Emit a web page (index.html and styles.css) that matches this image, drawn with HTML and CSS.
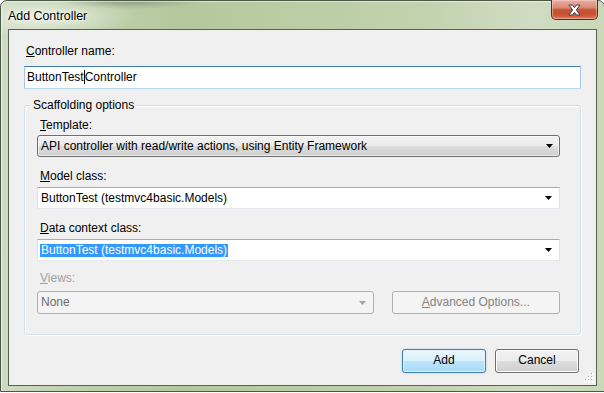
FILE: index.html
```html
<!DOCTYPE html>
<html lang="en">
<head>
<meta charset="UTF-8">
<title>Add Controller</title>
<link rel="stylesheet" href="styles.css">
</head>
<body>
    <div class="window">
        <div class="titlebar">
            <span class="title">Add Controller</span>
            <div class="close">
                <svg width="15" height="12" viewBox="0 0 15 12">
                    <path d="M2 1 L5.6 1 L7.5 3.6 L9.4 1 L13 1 L9.4 6 L13 11 L9.4 11 L7.5 8.4 L5.6 11 L2 11 L5.6 6 Z" fill="#fff" stroke="#3f3f4f" stroke-width="1" stroke-linejoin="round"/>
                </svg>
            </div>
        </div>
        <div class="client">
            <div class="label name-label"><u>C</u>ontroller name:</div>
            <div class="textbox">ButtonTest<span class="caret"></span>Controller</div>

            <div class="group">
                <span class="group-title">Scaffolding options</span>

                <div class="label"><u>T</u>emplate:</div>
                <div class="combo combo-list">
                    <span class="combo-text">API controller with read/write actions, using Entity Framework</span>
                    <svg class="arrow" width="7" height="4" viewBox="0 0 7 4"><polygon points="0,0 7,0 3.5,4" fill="#000"/></svg>
                </div>

                <div class="label field-gap"><u>M</u>odel class:</div>
                <div class="combo combo-edit">
                    <span class="combo-text">ButtonTest (testmvc4basic.Models)</span>
                    <svg class="arrow" width="7" height="4" viewBox="0 0 7 4"><polygon points="0,0 7,0 3.5,4" fill="#000"/></svg>
                </div>

                <div class="label field-gap"><u>D</u>ata context class:</div>
                <div class="combo combo-edit">
                    <span class="combo-text selected">ButtonTest (testmvc4basic.Models)</span>
                    <svg class="arrow" width="7" height="4" viewBox="0 0 7 4"><polygon points="0,0 7,0 3.5,4" fill="#000"/></svg>
                </div>

                <div class="label field-gap disabled views-label"><u>V</u>iews:</div>
                <div class="views-row">
                    <div class="combo combo-disabled">
                        <span class="combo-text">None</span>
                        <svg class="arrow" width="7" height="4" viewBox="0 0 7 4"><polygon points="0,0 7,0 3.5,4" fill="#a3a3a3"/></svg>
                    </div>
                    <div class="button button-disabled"><u>A</u>dvanced Options...</div>
                </div>
            </div>

            <div class="buttons">
                <div class="button button-default">Add</div>
                <div class="button">Cancel</div>
            </div>

            <svg class="grip" width="10" height="10" viewBox="0 0 10 10">
                <rect x="8" y="0" width="2" height="2" fill="#fff"/>
                <rect x="8" y="4" width="2" height="2" fill="#fff"/>
                <rect x="8" y="8" width="2" height="2" fill="#fff"/>
                <rect x="4" y="4" width="2" height="2" fill="#fff"/>
                <rect x="4" y="8" width="2" height="2" fill="#fff"/>
                <rect x="0" y="8" width="2" height="2" fill="#fff"/>
                <rect x="7" y="0" width="1" height="1" fill="#a6aca0"/>
                <rect x="7" y="3" width="1" height="1" fill="#a6aca0"/>
                <rect x="7" y="6" width="1" height="1" fill="#a6aca0"/>
                <rect x="4" y="3" width="1" height="1" fill="#a6aca0"/>
                <rect x="4" y="6" width="1" height="1" fill="#a6aca0"/>
                <rect x="1" y="6" width="1" height="1" fill="#a6aca0"/>
            </svg>
        </div>
    </div>
</body>
</html>
```

FILE: styles.css
```css
/* page */
body {
    margin: 0;
    background: #fff;
    overflow: hidden;
    font-family: "Liberation Sans", Arial, sans-serif;
    font-size: 12px;
    color: #000;
}

u {
    text-underline-offset: 1px;
}

/* aero frame */
.window {
    width: 589px;
    height: 384px;
    padding: 0 7px 6px 7px;
    border: 1px solid #4a5846;
    border-radius: 7px 7px 0 0;
    background:
        radial-gradient(ellipse 70px 8px at 130px 0px, rgba(110, 120, 110, 0.55), rgba(110, 120, 110, 0)),
        radial-gradient(ellipse 90px 20px at 45px 16px, rgba(240, 245, 235, 0.8), rgba(240, 245, 235, 0)),
        linear-gradient(90deg, #cfdac4 0%, #c0d1ad 12%, #b4c89d 30%, #bacda4 50%, #c2d2ae 70%, #d0dcc2 88%, #c9d8b8 100%);
    box-shadow: inset 1px 1px 0 rgba(255, 255, 255, 0.5);
}

.titlebar {
    height: 28px;
    display: flex;
    align-items: flex-start;
}

.title {
    padding: 8px 0 0 0;
    line-height: 15px;
    font-size: 12.4px;
    text-shadow: 0 0 6px #fff, 0 0 3px #fff;
}

.close {
    margin: -1px -1px 0 auto;
    width: 45px;
    height: 19px;
    border: 1px solid #5a2a22;
    border-top: none;
    border-radius: 0 0 5px 5px;
    background: linear-gradient(#e7b0a3 0%, #d98a77 40%, #c55235 52%, #c8502f 75%, #dc7a5b 100%);
    box-shadow: inset 0 0 0 1px rgba(255, 220, 210, 0.45);
    display: flex;
    justify-content: center;
    align-items: center;
}

/* client area */
.client {
    position: relative;
    height: 355px;
    border: 1px solid #56634f;
    background: #f0f0f0;
    padding: 0 15px;
}

.label {
    line-height: 15px;
    padding-left: 3px;
}

.name-label {
    margin-top: 14px;
    padding-left: 2px;
}

.textbox {
    margin-top: 7px;
    height: 21px;
    line-height: 21px;
    padding-left: 2px;
    border: 1px solid #a4c9e3;
    border-top-color: #3d7bad;
    border-bottom-color: #b7d9ed;
    border-radius: 1px;
    background: #fff;
}

.caret {
    display: inline-block;
    width: 1px;
    height: 14px;
    background: #000;
    vertical-align: -3px;
}

/* group box */
.group {
    position: relative;
    margin-top: 16px;
    height: 204px;
    padding: 12px 20px 12px 12px;
    border: 1px solid #d5dfe5;
    border-radius: 3px;
    box-shadow: inset 1px 1px 0 #fff, 1px 1px 0 #fff;
}

.group-title {
    position: absolute;
    top: -8px;
    left: 6px;
    padding: 0 2px;
    line-height: 15px;
    background: #f0f0f0;
}

.field-gap {
    margin-top: 12px;
}

.views-label {
    margin-top: 10px;
    margin-bottom: 5px;
}

.disabled {
    color: #a0a0a0;
}

/* combo boxes */
.combo {
    margin-top: 2px;
    height: 20px;
    border: 1px solid #707070;
    display: flex;
    align-items: center;
    padding: 0 6px 0 3px;
}

.combo-text {
    flex: 1;
    line-height: 15px;
}

.combo-list {
    border-radius: 3px;
    background: linear-gradient(#f2f2f2 0%, #ebebeb 50%, #dddddd 50%, #cfcfcf 100%);
    box-shadow: inset 0 0 0 1px rgba(255, 255, 255, 0.6);
}

.combo-edit {
    margin-top: 3px;
    background: #fff;
    border-color: #e2e3ea;
    border-top-color: #abadb3;
    border-bottom-color: #e3e9ef;
}

.combo-edit .arrow {
    margin-right: 1px;
}

.selected {
    flex: none;
    margin-left: -1px;
    padding: 0 1px;
    line-height: 13px;
    background: #3399ff;
    color: #fff;
}

.combo-edit .selected + .arrow {
    margin-left: auto;
}

.views-row {
    display: flex;
    gap: 18px;
}

.combo-disabled {
    margin-top: 0;
    width: 326px;
    height: 21px;
    border-color: #adb2b5;
    border-radius: 3px;
    background: #f4f4f4;
    color: #6d6d6d;
    padding-right: 7px;
}

/* buttons */
.button {
    width: 82px;
    height: 22px;
    line-height: 21px;
    text-align: center;
    border: 1px solid #707070;
    border-radius: 3px;
    background: linear-gradient(#f2f2f2 0%, #ebebeb 50%, #dddddd 50%, #cfcfcf 100%);
    box-shadow: inset 0 0 0 1px #fcfcfc;
}

.button-default {
    border-color: #3c7fb1;
    background: linear-gradient(#eaf6fd 0%, #d9f0fc 50%, #bee6fd 50%, #a7d9f5 100%);
    box-shadow: inset 0 0 0 1px #e5f4fc, 0 0 2px rgba(80, 170, 230, 0.5);
}

.button-disabled {
    width: 167px;
    height: 21px;
    border-color: #adb2b5;
    background: #f4f4f4;
    box-shadow: none;
    color: #838383;
}

.buttons {
    margin-top: 14px;
    display: flex;
    justify-content: flex-end;
    gap: 9px;
    padding-right: 2px;
}

.grip {
    position: absolute;
    right: 2px;
    bottom: 2px;
}
```
